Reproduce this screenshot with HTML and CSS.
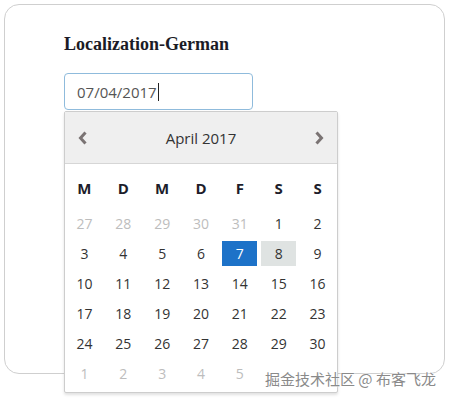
FILE: index.html
```html
<!DOCTYPE html>
<html lang="de">
<head>
    <meta charset="UTF-8">
    <title>Localization-German</title>
    <link rel="stylesheet" href="styles.css">
</head>
<body>
    <div class="page">
        <div class="card">
            <h3 class="title">Localization-German</h3>
            <div class="picker">
                <div class="date-input">07/04/2017<span class="caret"></span></div>

                <div class="dropdown">
                    <div class="cal-head">
                        <svg class="nav" width="10" height="14" viewBox="0 0 10 14"><path d="M7.5 1.5 L2.5 7 L7.5 12.5" fill="none" stroke="#7a7373" stroke-width="3"/></svg>
                        <span class="month">April 2017</span>
                        <svg class="nav" width="10" height="14" viewBox="0 0 10 14"><path d="M2.5 1.5 L7.5 7 L2.5 12.5" fill="none" stroke="#7a7373" stroke-width="3"/></svg>
                    </div>
                    <div class="cal-grid">
                        <span class="dow">M</span><span class="dow">D</span><span class="dow">M</span><span class="dow">D</span><span class="dow">F</span><span class="dow">S</span><span class="dow">S</span>

                        <span class="day old">27</span><span class="day old">28</span><span class="day old">29</span><span class="day old">30</span><span class="day old">31</span><span class="day">1</span><span class="day">2</span>
                        <span class="day">3</span><span class="day">4</span><span class="day">5</span><span class="day">6</span><span class="day active">7</span><span class="day today">8</span><span class="day">9</span>
                        <span class="day">10</span><span class="day">11</span><span class="day">12</span><span class="day">13</span><span class="day">14</span><span class="day">15</span><span class="day">16</span>
                        <span class="day">17</span><span class="day">18</span><span class="day">19</span><span class="day">20</span><span class="day">21</span><span class="day">22</span><span class="day">23</span>
                        <span class="day">24</span><span class="day">25</span><span class="day">26</span><span class="day">27</span><span class="day">28</span><span class="day">29</span><span class="day">30</span>
                        <span class="day old">1</span><span class="day old">2</span><span class="day old">3</span><span class="day old">4</span><span class="day old">5</span><span class="day"></span><span class="day"></span>
                    </div>
                </div>
            </div>
        </div>

        <div class="watermark">掘金技术社区 @ 布客飞龙</div>
    </div>
</body>
</html>
```

FILE: styles.css
```css
html, body {
    margin: 0;
    padding: 0;
    background-color: #fff;
    font-family: 'Open Sans', 'Noto Sans', sans-serif;
}

.page {
    position: relative;
    width: 449px;
    height: 398px;
    padding-top: 4px;
    box-sizing: border-box;
}

.card {
    margin-left: 4px;
    width: 441px;
    height: 370px;
    border: 1px solid #cfcfcf;
    border-radius: 15px;
    padding: 28px 0 0 59px;
    box-sizing: border-box;
}

.title {
    margin: 0 0 18px;
    font-family: 'Liberation Serif', serif;
    font-size: 18px;
    line-height: 22px;
    font-weight: bold;
    color: #1b1b26;
}

.picker {
    position: relative;
}

.date-input {
    width: 189px;
    height: 37px;
    box-sizing: border-box;
    border: 1px solid #8fbbdc;
    border-radius: 4px;
    padding: 0 12px;
    display: flex;
    align-items: center;
    font-size: 15px;
    color: #555;
}

.caret {
    display: inline-block;
    width: 1px;
    height: 18px;
    background-color: #222;
    margin-left: 1px;
}

/* popup calendar */
.dropdown {
    position: absolute;
    top: 38px;
    left: 0;
    width: 274px;
    border: 1px solid #cdcdcd;
    border-radius: 2px;
    background-color: #fff;
    box-shadow: 0 2px 3px rgba(0, 0, 0, 0.12);
    box-sizing: border-box;
    padding-bottom: 4px;
    z-index: 1;
}

.cal-head {
    height: 51px;
    display: flex;
    align-items: center;
    justify-content: space-between;
    padding: 0 13px;
    background-color: #efefef;
    border-bottom: 1px solid #d6d6d6;
}

.month {
    font-size: 15px;
    color: #333;
}

.cal-grid {
    display: grid;
    grid-template-columns: repeat(7, 1fr);
    grid-template-rows: 44px;
    grid-auto-rows: 30px;
}

.dow {
    display: flex;
    align-items: center;
    justify-content: center;
    padding-top: 4px;
    font-size: 15px;
    font-weight: bold;
    color: #1d1d2b;
}

.day {
    align-self: center;
    height: 25px;
    margin: 0 2px;
    display: flex;
    align-items: center;
    justify-content: center;
    font-size: 14px;
    color: #333;
}

.day.old {
    color: #bdbdbd;
}

.day.active {
    background-color: #1d72c8;
    color: #fff;
}

.day.today {
    background-color: #dfe3e2;
}

.watermark {
    position: absolute;
    left: 265px;
    top: 368px;
    z-index: 2;
    font-family: 'Noto Sans CJK SC', sans-serif;
    font-size: 15px;
    color: #8a8a8a;
    text-shadow: 0 0 2px #fff, 0 0 2px #fff;
}
```
